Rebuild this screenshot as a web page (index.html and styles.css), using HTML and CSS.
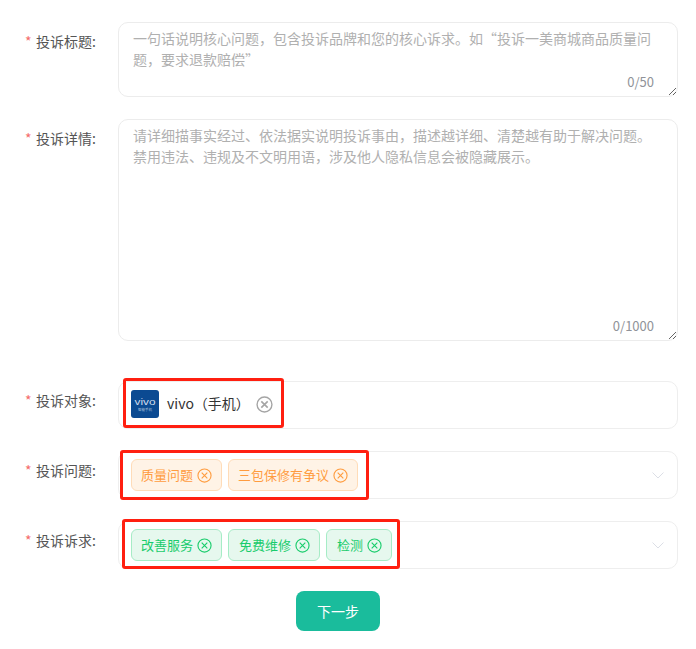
FILE: index.html
```html
<!DOCTYPE html>
<html lang="zh-CN">
<head>
<meta charset="utf-8">
<title>投诉</title>
<link rel="stylesheet" href="styles.css">
</head>
<body>
<form class="form">
  <div class="row">
    <div class="label"><span class="star">*</span>投诉标题:</div>
    <div class="area-wrap">
      <textarea class="area area-title" placeholder="一句话说明核心问题，包含投诉品牌和您的核心诉求。如“投诉一美商城商品质量问题，要求退款赔偿”"></textarea>
      <span class="count">0/50</span>
    </div>
  </div>
  <div class="row row-detail">
    <div class="label"><span class="star">*</span>投诉详情:</div>
    <div class="area-wrap">
      <textarea class="area area-detail" placeholder="请详细描事实经过、依法据实说明投诉事由，描述越详细、清楚越有助于解决问题。禁用违法、违规及不文明用语，涉及他人隐私信息会被隐藏展示。"></textarea>
      <span class="count">0/1000</span>
    </div>
  </div>
  <div class="row">
    <div class="label"><span class="star">*</span>投诉对象:</div>
    <div class="select select-target">
      <svg class="logo" viewBox="0 0 28 28" width="28" height="28">
        <rect width="28" height="28" rx="3" fill="#0b4a92"/>
        <text x="3.5" y="15" textLength="21" lengthAdjust="spacingAndGlyphs" font-size="9" font-family="Liberation Sans, sans-serif" fill="#cfdded">vivo</text>
        <text x="14" y="20.5" text-anchor="middle" font-size="3.5" font-family="Noto Sans CJK SC, sans-serif" fill="#a9c0da">智能手机</text>
      </svg>
      <span class="target"><span class="lift">vivo（手机）</span></span>
      <svg class="close close-gray" viewBox="0 0 16 16" width="17" height="17"><circle cx="8" cy="8" r="7" fill="none" stroke="currentColor" stroke-width="1.3"/><path d="M5 5l6 6M11 5l-6 6" fill="none" stroke="currentColor" stroke-width="1.5"/></svg>
    </div>
    <div class="mark mark-one"></div>
  </div>
  <div class="row">
    <div class="label"><span class="star">*</span>投诉问题:</div>
    <div class="select">
      <span class="tag tag-orange"><span class="lift">质量问题</span><svg class="close" viewBox="0 0 16 16" width="15" height="15"><circle cx="8" cy="8" r="7" fill="none" stroke="currentColor" stroke-width="1.2"/><path d="M5 5l6 6M11 5l-6 6" fill="none" stroke="currentColor" stroke-width="1.2"/></svg></span>
      <span class="tag tag-orange"><span class="lift">三包保修有争议</span><svg class="close" viewBox="0 0 16 16" width="15" height="15"><circle cx="8" cy="8" r="7" fill="none" stroke="currentColor" stroke-width="1.2"/><path d="M5 5l6 6M11 5l-6 6" fill="none" stroke="currentColor" stroke-width="1.2"/></svg></span>
      <svg class="chevron" viewBox="0 0 12 7" width="12" height="7"><path d="M.5.5L6 6 11.5.5" fill="none" stroke="currentColor"/></svg>
    </div>
    <div class="mark mark-two"></div>
  </div>
  <div class="row">
    <div class="label"><span class="star">*</span>投诉诉求:</div>
    <div class="select">
      <span class="tag tag-green"><span class="lift">改善服务</span><svg class="close" viewBox="0 0 16 16" width="15" height="15"><circle cx="8" cy="8" r="7" fill="none" stroke="currentColor" stroke-width="1.2"/><path d="M5 5l6 6M11 5l-6 6" fill="none" stroke="currentColor" stroke-width="1.2"/></svg></span>
      <span class="tag tag-green tag-wide"><span class="lift">免费维修</span><svg class="close" viewBox="0 0 16 16" width="15" height="15"><circle cx="8" cy="8" r="7" fill="none" stroke="currentColor" stroke-width="1.2"/><path d="M5 5l6 6M11 5l-6 6" fill="none" stroke="currentColor" stroke-width="1.2"/></svg></span>
      <span class="tag tag-green tag-wide"><span class="lift">检测</span><svg class="close" viewBox="0 0 16 16" width="15" height="15"><circle cx="8" cy="8" r="7" fill="none" stroke="currentColor" stroke-width="1.2"/><path d="M5 5l6 6M11 5l-6 6" fill="none" stroke="currentColor" stroke-width="1.2"/></svg></span>
      <svg class="chevron" viewBox="0 0 12 7" width="12" height="7"><path d="M.5.5L6 6 11.5.5" fill="none" stroke="currentColor"/></svg>
    </div>
    <div class="mark mark-three"></div>
  </div>
  <div class="actions"><button type="button" class="next">下一步</button></div>
</form>
</body>
</html>
```
FILE: styles.css
```css
* { box-sizing: border-box; }
html, body { margin: 0; background: #fff; }
body { font-family: "Noto Sans CJK SC", "Liberation Sans", sans-serif; font-size: 14px; color: #333; }
.form { display: flex; flex-direction: column; gap: 22px; padding: 22px 18px 0 25px; }
.row { display: flex; position: relative; }
.row-detail { margin-bottom: 18px; }
.label { width: 93px; flex: none; padding-top: 9px; line-height: 21px; color: #555; white-space: nowrap; }
.star { color: #f56c6c; display: inline-block; width: 11px; }
.area-wrap { flex: 1; position: relative; display: flex; }
.area { display: block; width: 100%; padding: 5px 14px; border: 1px solid #ececec; border-radius: 10px; font: inherit; line-height: 21px; color: #333; outline: none; resize: both; background: #fff; }
.area::placeholder { color: #b0b0b0; opacity: 1; }
.area-title { height: 75px; }
.area-detail { height: 222px; }
.count { position: absolute; right: 24px; bottom: 5px; line-height: 20px; font-size: 13px; color: #909399; }
.select { flex: 1; height: 48px; border: 1px solid #eeeeee; border-radius: 10px; display: flex; align-items: center; gap: 6px; padding: 0 12px; }
.select-target { padding-bottom: 2px; }
.logo { flex: none; margin-right: 2px; }
.target { color: #333; white-space: nowrap; display: flex; }
.lift { display: block; margin-bottom: 2px; }
.close { flex: none; }
.close-gray { color: #a5a5a5; }
.tag { display: inline-flex; align-items: center; gap: 4px; height: 32px; padding: 0 9px; border: 1px solid; border-radius: 6px; font-size: 13px; white-space: nowrap; }
.tag-wide { padding-left: 10px; }
.tag-orange { color: #ff9c3f; background: #fff3e6; border-color: #ffdcb8; }
.tag-green { color: #19cc6c; background: #e6f8ee; border-color: #a6ecc6; }
.chevron { margin-left: auto; margin-right: 1px; color: #dcdfe6; }
.mark { position: absolute; border: 3px solid #ff1f10; border-radius: 3px; pointer-events: none; }
.mark-one { left: 98px; top: -3px; width: 161px; height: 50px; }
.mark-two { left: 95px; top: -1px; width: 249px; height: 50px; }
.mark-three { left: 97px; top: -2px; width: 278px; height: 50px; }
.actions { display: flex; justify-content: center; padding-right: 27px; }
.next { width: 84px; height: 40px; border: 0; border-radius: 8px; background: #1abc9c; color: #fff; font: inherit; }
```
